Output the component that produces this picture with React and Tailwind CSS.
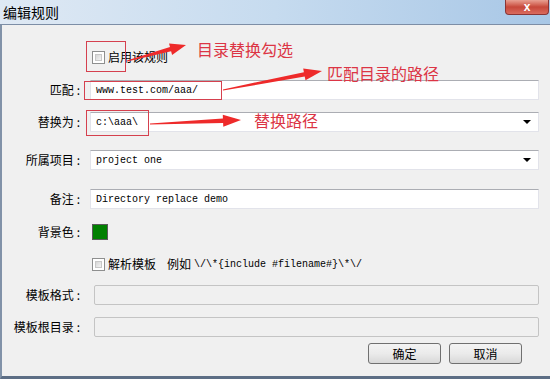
import React from "react";

const cjk = { fontFamily: '"Noto Sans CJK SC", "Noto Sans", sans-serif' };
const mono = { fontFamily: '"Liberation Mono", "Noto Sans CJK SC", monospace' };

function Arrow({ x1, y1, x2, y2, head = 16, hw = 6 }) {
  // tapered red arrow drawn from tail to tip
  const dx = x2 - x1;
  const dy = y2 - y1;
  const len = Math.hypot(dx, dy);
  const ux = dx / len;
  const uy = dy / len;
  const nx = -uy;
  const ny = ux;
  const bx = x2 - ux * head;
  const by = y2 - uy * head;
  const p = (x, y) => `${x.toFixed(1)},${y.toFixed(1)}`;
  const pts = [
    p(x1 + nx * 0.6, y1 + ny * 0.6),
    p(bx + nx * 2.2, by + ny * 2.2),
    p(bx + nx * hw, by + ny * hw),
    p(x2, y2),
    p(bx - nx * hw, by - ny * hw),
    p(bx - nx * 2.2, by - ny * 2.2),
    p(x1 - nx * 0.6, y1 - ny * 0.6),
  ].join(" ");
  return <polygon points={pts} fill="#ee2a2a" />;
}

function Checkbox() {
  return (
    <div className="w-[13px] h-[13px] border border-[#8e8f8f] bg-white p-[2px]">
      <div className="w-full h-full bg-gradient-to-br from-[#d6d6d6] to-[#f4f4f4] border border-[#c8c8c8]" />
    </div>
  );
}

function Label({ children }) {
  return (
    <div className="w-[80px] shrink-0 text-right text-[12px] text-black pr-[2px]" style={cjk}>
      {children}
      <span className="ml-[3px]">:</span>
    </div>
  );
}

function Field({ value, dropdown }) {
  return (
    <div className="ml-[8px] w-[449px] h-[20px] bg-white border border-[#e2e3ea] border-t-[#abadb3] flex items-center px-[5px]">
      <span className="flex-1 text-[10px] text-black whitespace-pre" style={mono}>
        {value}
      </span>
      {dropdown && (
        <span className="w-0 h-0 border-l-[4px] border-r-[4px] border-t-[4px] border-l-transparent border-r-transparent border-t-black mr-[2px]" />
      )}
    </div>
  );
}

function DisabledField() {
  return <div className="ml-[12px] w-[445px] h-[20px] rounded-[2px] bg-[#f0f0f0] border border-[#c4c4c4]" />;
}

function Button({ children }) {
  return (
    <div
      className="w-[73px] h-[21px] rounded-[3px] border border-[#707070] bg-gradient-to-b from-[#f3f3f3] via-[#ebebeb] to-[#d8d8d8] flex items-center justify-center text-[12px] text-black"
      style={cjk}
    >
      {children}
    </div>
  );
}

export default function App() {
  return (
    <div className="relative w-[550px] h-[379px] overflow-hidden flex flex-col bg-[#f0f0f0]" style={cjk}>
      {/* title bar */}
      <div className="h-[24px] shrink-0 relative bg-gradient-to-r from-[#dfe9f4] via-[#c6dbef] to-[#a8c7e6] flex items-start">
        <span className="ml-[3px] mt-[3px] text-[14px] text-black leading-[18px]">编辑规则</span>
        <div className="absolute right-[1px] top-0 w-[44px] h-[15px] rounded-b-[4px] border border-t-0 border-[#8a3535] bg-gradient-to-b from-[#e8a093] via-[#c7473a] to-[#d96b5e] flex items-center justify-center text-white text-[12px] font-bold leading-none" style={{ fontFamily: '"Liberation Sans", sans-serif' }}>
          x
        </div>
      </div>
      <div className="h-px shrink-0 bg-[#7d8ea6]" />

      {/* body */}
      <div className="flex-1 flex flex-col border-l-2 border-[#8192a8] border-b-[3px] border-b-[#5d6e85]">
        <div className="mt-[22px] h-[20px] flex items-center pl-[90px] gap-[3px]">
          <Checkbox />
          <span className="text-[12px] text-black">启用该规则</span>
        </div>

        <div className="mt-[13px] flex items-center">
          <Label>匹配</Label>
          <Field value="www.test.com/aaa/" />
        </div>

        <div className="mt-[12px] flex items-center">
          <Label>替换为</Label>
          <Field value={"c:\\aaa\\"} dropdown />
        </div>

        <div className="mt-[18px] flex items-center">
          <Label>所属项目</Label>
          <Field value="project one" dropdown />
        </div>

        <div className="mt-[19px] flex items-center">
          <Label>备注</Label>
          <Field value="Directory replace demo" />
        </div>

        <div className="mt-[13px] h-[20px] flex items-center">
          <Label>背景色</Label>
          <div className="ml-[10px] w-[16px] h-[16px] bg-[#008000] border border-[#5a5a5a]" />
        </div>

        <div className="mt-[12px] h-[20px] flex items-center pl-[90px] gap-[3px]">
          <Checkbox />
          <span className="text-[12px] text-black">解析模板</span>
          <span className="ml-[8px] text-[12px] text-black">例如</span>
          <span className="text-[10px] text-black whitespace-pre" style={mono}>
            {"\\/\\*{include #filename#}\\*\\/"}
          </span>
        </div>

        <div className="mt-[11px] flex items-center">
          <Label>模板格式</Label>
          <DisabledField />
        </div>

        <div className="mt-[12px] flex items-center">
          <Label>模板根目录</Label>
          <DisabledField />
        </div>

        <div className="mt-[6px] flex justify-end gap-[8px] pr-[28px]">
          <Button>确定</Button>
          <Button>取消</Button>
        </div>
      </div>

      {/* annotations */}
      <svg className="absolute left-0 top-0 pointer-events-none" width="550" height="379">
        <rect x="86.5" y="41.5" width="39" height="30" fill="none" stroke="#d5404e" strokeWidth="1" />
        <rect x="84.5" y="81.5" width="137" height="18" fill="none" stroke="#d5404e" strokeWidth="1" />
        <rect x="86.5" y="110.5" width="62" height="25" fill="none" stroke="#d5404e" strokeWidth="1" />
        <Arrow x1={127} y1={61} x2={186} y2={45} />
        <Arrow x1={223} y1={90} x2={322} y2={71} head={18} />
        <Arrow x1={150} y1={124} x2={241} y2={120} head={18} />
      </svg>
      <span className="absolute left-[197px] top-[38px] text-[16px] text-[#dc3545] leading-[22px]">目录替换勾选</span>
      <span className="absolute left-[327px] top-[62px] text-[16px] text-[#dc3545] leading-[22px]">匹配目录的路径</span>
      <span className="absolute left-[254px] top-[109px] text-[16px] text-[#dc3545] leading-[22px]">替换路径</span>
    </div>
  );
}
